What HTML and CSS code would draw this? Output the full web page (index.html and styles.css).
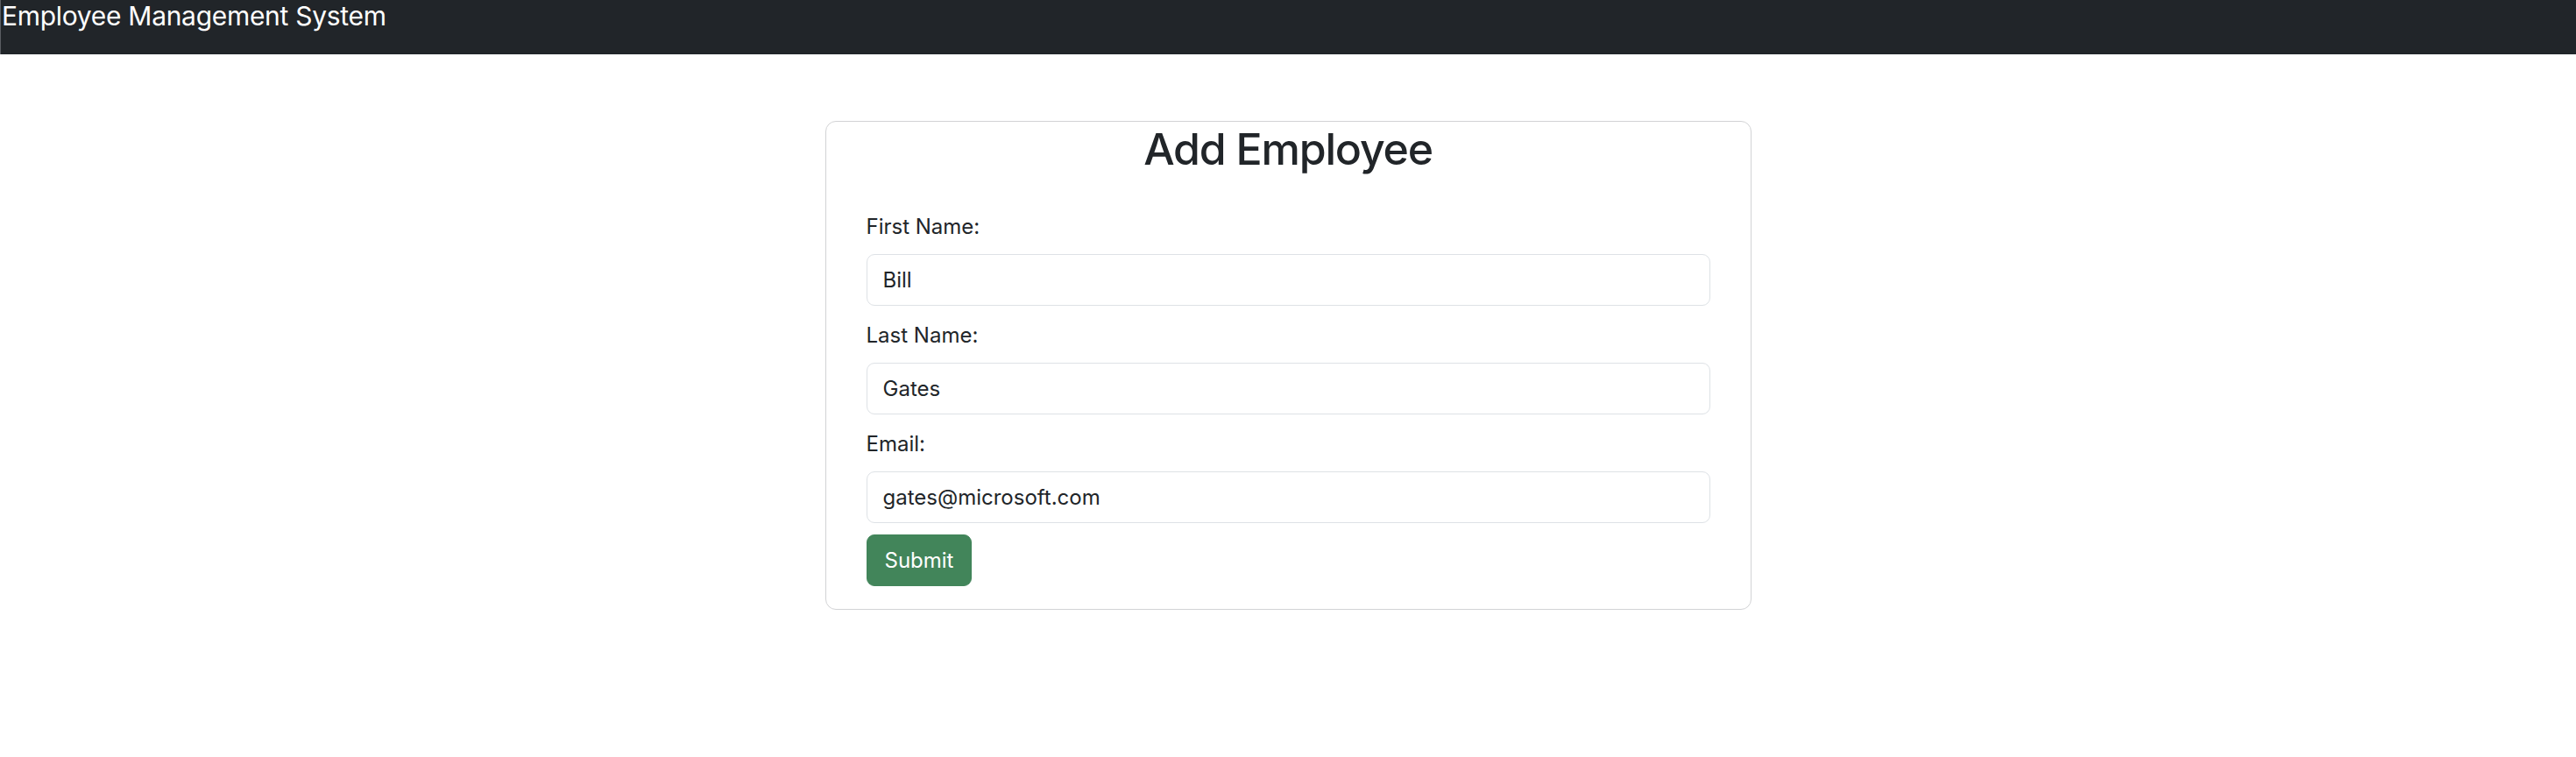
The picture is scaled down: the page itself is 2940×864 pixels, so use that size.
FILE: index.html
```html
<!DOCTYPE html>
<html lang="en">
<head>
<meta charset="utf-8">
<title>Employee Management System</title>
<link rel="stylesheet" href="styles.css">
</head>
<body>
<header class="navbar">
  <span class="brand">Employee Management System</span>
</header>
<main class="page">
  <section class="card">
    <h2 class="card-title">Add Employee</h2>
    <form class="form">
      <div class="field">
        <label class="label" for="fn">First Name:</label>
        <input class="input" id="fn" type="text" value="Bill">
      </div>
      <div class="field">
        <label class="label" for="ln">Last Name:</label>
        <input class="input" id="ln" type="text" value="Gates">
      </div>
      <div class="field">
        <label class="label" for="em">Email:</label>
        <input class="input" id="em" type="text" value="gates@microsoft.com">
      </div>
      <button class="btn" type="button">Submit</button>
    </form>
  </section>
</main>
</body>
</html>
```

FILE: styles.css
```css
* { box-sizing: border-box; }

html, body {
  margin: 0;
  padding: 0;
  background: #ffffff;
}

body {
  font-family: Inter, "Liberation Sans", Arial, sans-serif;
  color: #212529;
}

.navbar {
  height: 62px;
  background: #212529;
  border-left: 1px solid #5a5d62;
}

.brand {
  display: block;
  color: #ffffff;
  font-size: 30px;
  line-height: 36px;
  letter-spacing: -0.3px;
  padding-left: 1px;
}

.page {
  padding-top: 76px;
}

.card {
  width: 1057px;
  margin: 0 auto;
  border: 1px solid #d2d3d5;
  border-radius: 12px;
  padding: 1px 46px 26px 46px;
  background: #ffffff;
}

.card-title {
  margin: 0;
  text-align: center;
  font-size: 50px;
  font-weight: 500;
  line-height: 61px;
  letter-spacing: -1.2px;
  color: #212529;
}

.form {
  display: flex;
  flex-direction: column;
  padding-top: 40px;
}

.field {
  display: flex;
  flex-direction: column;
  margin-bottom: 16px;
}

.field:last-of-type {
  margin-bottom: 13px;
}

.label {
  font-size: 24px;
  line-height: 36px;
  margin-bottom: 13px;
}

.input {
  height: 59px;
  width: 100%;
  border: 1px solid #dee2e6;
  border-radius: 9px;
  padding: 0 18px;
  font-family: inherit;
  font-size: 24px;
  color: #212529;
  background: #ffffff;
  outline: none;
}

.btn {
  align-self: flex-start;
  height: 59px;
  padding: 0 20px;
  border: 1px solid #42855a;
  border-radius: 9px;
  background: #42855a;
  color: #ffffff;
  font-family: inherit;
  font-size: 24px;
  line-height: 36px;
}
```
